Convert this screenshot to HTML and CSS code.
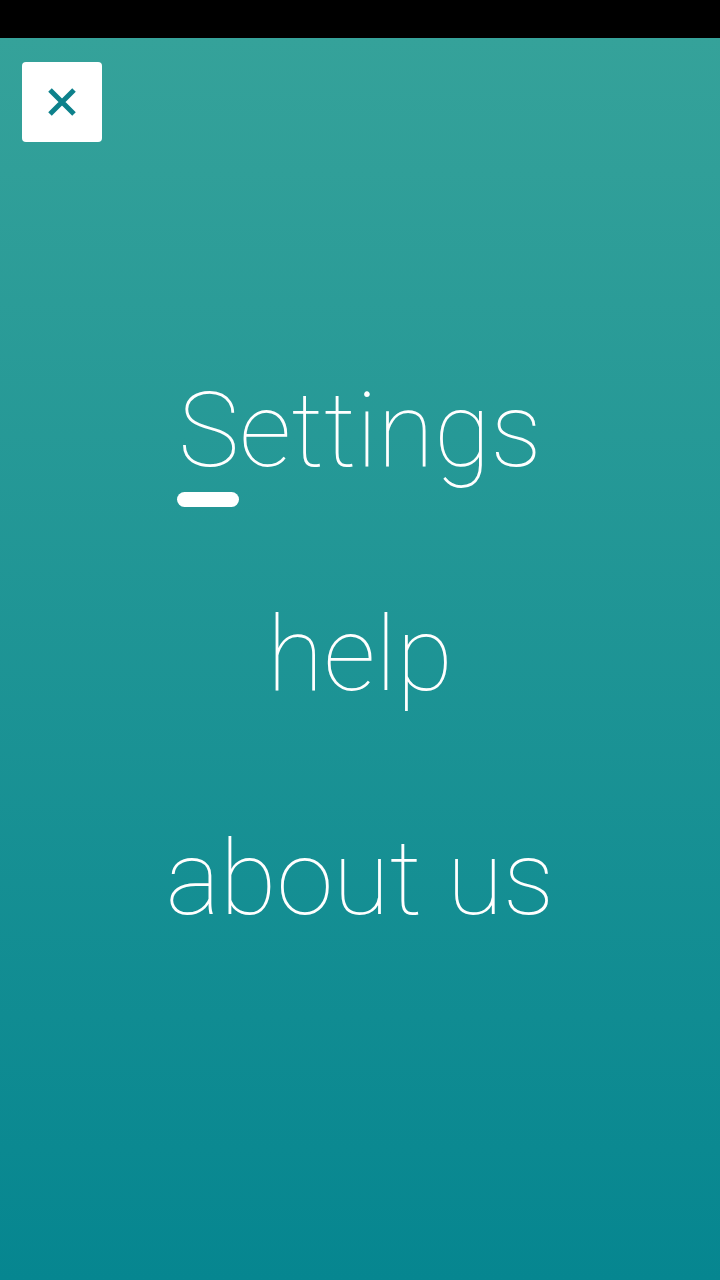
FILE: index.html
```html
<!DOCTYPE html>
<html lang="en">
<head>
<meta charset="utf-8">
<meta name="viewport" content="width=720, initial-scale=1">
<title>Menu</title>
<link rel="stylesheet" href="styles.css">
</head>
<body>
<div class="screen">
  <div class="statusbar"></div>
  <main class="main">
    <button class="close" aria-label="Close">
      <svg width="28" height="28" viewBox="0 0 28 28" aria-hidden="true">
        <path d="M2 2 L26 26 M26 2 L2 26" stroke="#0d818b" stroke-width="5" stroke-linecap="butt" fill="none"/>
      </svg>
    </button>
    <nav class="menu">
      <a class="item active" href="#"><span class="label">Settings<span class="marker"></span></span></a>
      <a class="item" href="#"><span class="label">help</span></a>
      <a class="item" href="#"><span class="label">about us</span></a>
    </nav>
  </main>
</div>
</body>
</html>
```
FILE: styles.css
```css
html, body {
  margin: 0;
  padding: 0;
}
body {
  font-family: Roboto, "Noto Sans", sans-serif;
  background: #000;
}
.screen {
  width: 720px;
  height: 1280px;
  display: flex;
  flex-direction: column;
  overflow: hidden;
}
.statusbar {
  height: 38px;
  flex: none;
  background: #000;
}
.main {
  flex: 1;
  position: relative;
  background: linear-gradient(to bottom, #35a29a 0%, #068690 100%);
  display: flex;
  flex-direction: column;
  justify-content: center;
  padding-bottom: 8px;
  box-sizing: border-box;
}
.close {
  position: absolute;
  left: 22px;
  top: 24px;
  width: 80px;
  height: 80px;
  border: none;
  border-radius: 4px;
  background: #fff;
  padding: 0;
  display: flex;
  align-items: center;
  justify-content: center;
  cursor: pointer;
}
.menu {
  display: flex;
  flex-direction: column;
  align-items: center;
}
.item {
  display: block;
  color: #fff;
  text-decoration: none;
  font-size: 103px;
  font-weight: 100;
  line-height: 224px;
  height: 224px;
  text-align: center;
}
.label {
  position: relative;
  display: inline-block;
}
.marker {
  position: absolute;
  left: -1px;
  top: 173px;
  width: 62px;
  height: 15px;
  border-radius: 8px;
  background: #fff;
}
```
